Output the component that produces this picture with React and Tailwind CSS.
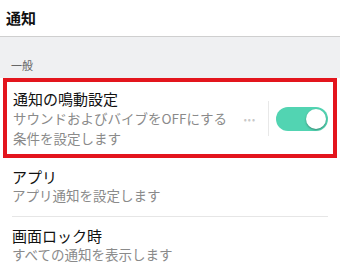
import React from "react"

const font = { fontFamily: '"Noto Sans CJK JP", "Noto Sans", sans-serif' }

const Toggle = () => (
  <div className="w-[52px] h-[24px] rounded-full bg-[#52d4b2] flex items-center justify-end pr-[2px] shrink-0">
    <div className="w-[20px] h-[20px] rounded-full bg-white shadow-[0_1px_2px_rgba(0,0,0,0.35)]" />
  </div>
)

const Row = ({ title, sub, last }) => (
  <div className="px-[12px]">
    <div className={`pt-[9px] pb-[11px] ${last ? "" : "border-b border-[#e6e6e6]"}`}>
      <p className="text-[15px] leading-[19px] text-[#111]">{title}</p>
      <p className="text-[13.5px] leading-[19px] text-[#8a8a8a]">{sub}</p>
    </div>
  </div>
)

export default function App() {
  return (
    <div className="w-[340px] h-[271px] overflow-hidden bg-white" style={font}>
      <div className="h-[37px] border-b border-[#cfcfcf] px-[6px] flex items-center">
        <h1 className="text-[15px] font-bold text-[#111]">通知</h1>
      </div>
      <div className="h-[41px] bg-[#eff0f2] px-[11px] flex items-end pb-[5px]">
        <span className="text-[11px] text-[#666]">一般</span>
      </div>
      <div className="px-[3px]">
        <div className="border-4 border-[#e3151d] pl-[6px] pr-[5px] pt-[7px] pb-[6px] flex items-center">
          <div className="flex-1">
            <p className="text-[15px] leading-[19px] text-[#111]">通知の鳴動設定</p>
            <p className="text-[13.5px] leading-[20px] text-[#8a8a8a]">
              サウンドおよびバイブをOFFにする
              <br />
              条件を設定します
            </p>
          </div>
          <span className="text-[9px] text-[#c8c8c8] tracking-[1px] mr-[12px] mt-[2px]">•••</span>
          <div className="w-px h-[35px] bg-[#e8e8e8] mr-[7px]" />
          <Toggle />
        </div>
      </div>
      <Row title="アプリ" sub="アプリ通知を設定します" />
      <Row title="画面ロック時" sub="すべての通知を表示します" last />
    </div>
  )
}
